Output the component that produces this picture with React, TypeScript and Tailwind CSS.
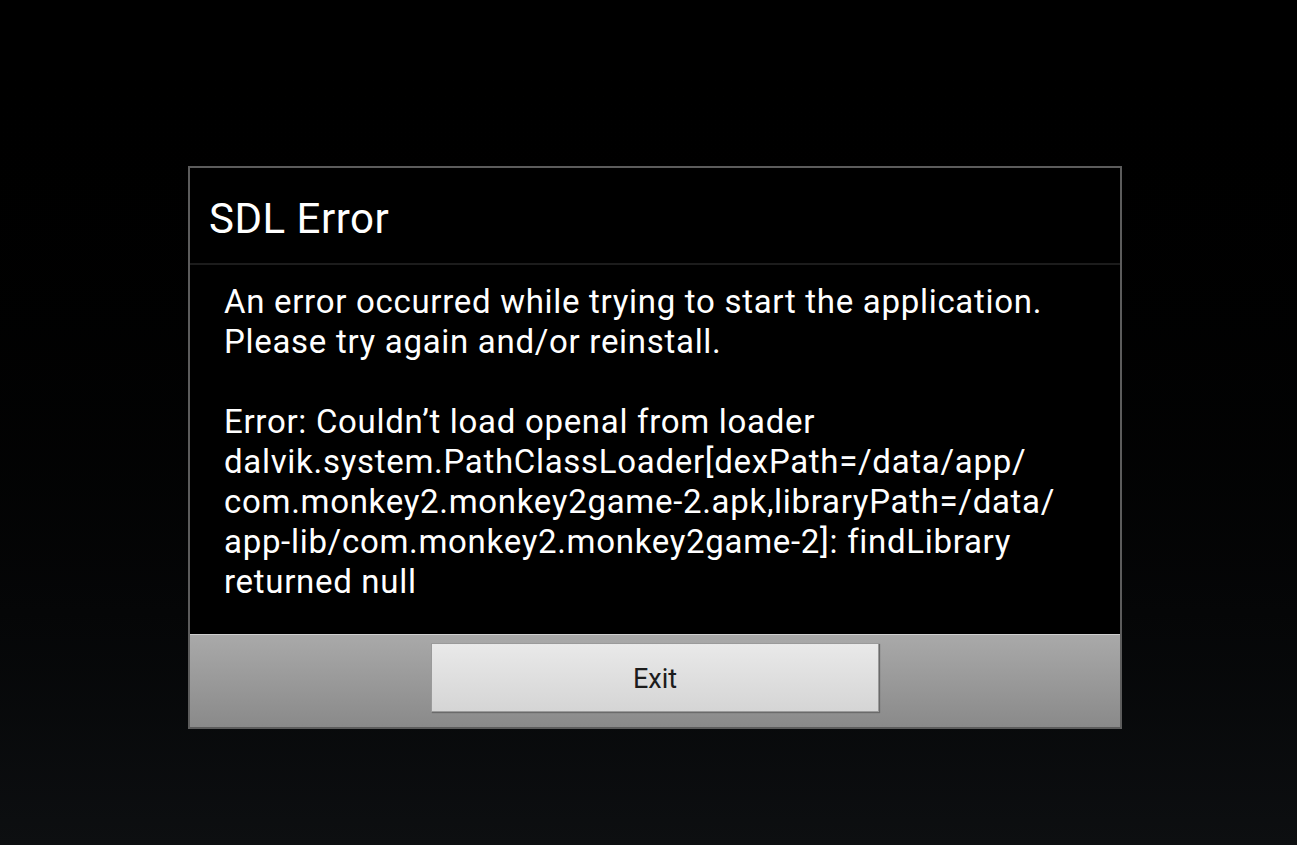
import React from "react";

const lines = [
  "An error occurred while trying to start the application.",
  "Please try again and/or reinstall.",
  "",
  "Error: Couldn\u2019t load openal from loader",
  "dalvik.system.PathClassLoader[dexPath=/data/app/",
  "com.monkey2.monkey2game-2.apk,libraryPath=/data/",
  "app-lib/com.monkey2.monkey2game-2]: findLibrary",
  "returned null",
];

export default function App() {
  return (
    <div
      className="w-full h-[845px] overflow-hidden bg-gradient-to-b from-black to-[#0d0f11] pt-[166px] pl-[188px]"
      style={{ fontFamily: "Roboto, 'Noto Sans', sans-serif" }}
    >
      <div className="w-[934px] border-2 border-[#5c5c5c] bg-black flex flex-col">
        {/* title */}
        <div className="h-[97px] flex items-center pl-[19px] border-b-2 border-[#1c1c1c]">
          <h1 className="text-[42px] tracking-[0.5px] text-white leading-none pt-[6px]">SDL Error</h1>
        </div>

        {/* message */}
        <div className="pl-[34px] pr-4 pt-[17px] pb-[32px] text-white text-[33px] tracking-[0.7px] leading-[40px]">
          {lines.map((l, i) => (
            <p key={i} className="whitespace-nowrap h-[40px]">
              {l}
            </p>
          ))}
        </div>

        {/* buttons */}
        <div className="h-[93px] border-t border-[#cfcfcf] bg-gradient-to-b from-[#a9a9a9] to-[#8a8a8a] flex justify-center pt-[8px]">
          <button className="w-[448px] h-[69px] bg-gradient-to-b from-[#e9e9e9] to-[#d5d5d5] border border-[#9a9a9a] shadow-[1px_1px_1px_#6a6a6a] text-[27px] text-[#1c1c1c] flex items-center justify-center pt-[3px]">
            Exit
          </button>
        </div>
      </div>
    </div>
  );
}
